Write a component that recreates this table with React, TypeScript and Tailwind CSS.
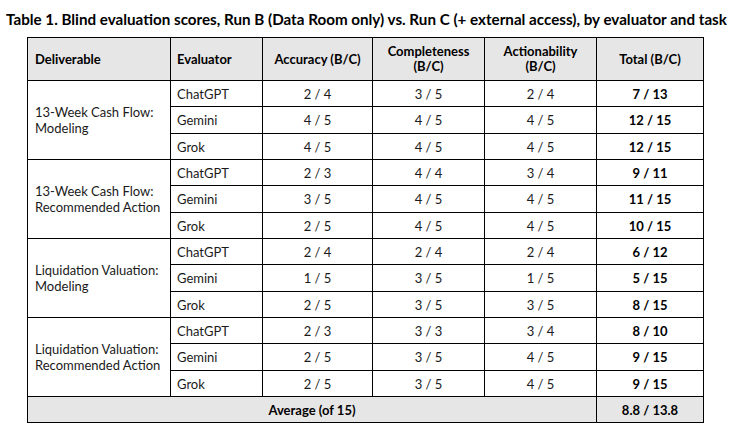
import React from "react";

type Row = { ev: string; a: string; c: string; ac: string; t: string };
type Group = { name: [string, string]; rows: Row[] };

const groups: Group[] = [
  {
    name: ["13-Week Cash Flow:", "Modeling"],
    rows: [
      { ev: "ChatGPT", a: "2 / 4", c: "3 / 5", ac: "2 / 4", t: "7 / 13" },
      { ev: "Gemini", a: "4 / 5", c: "4 / 5", ac: "4 / 5", t: "12 / 15" },
      { ev: "Grok", a: "4 / 5", c: "4 / 5", ac: "4 / 5", t: "12 / 15" },
    ],
  },
  {
    name: ["13-Week Cash Flow:", "Recommended Action"],
    rows: [
      { ev: "ChatGPT", a: "2 / 3", c: "4 / 4", ac: "3 / 4", t: "9 / 11" },
      { ev: "Gemini", a: "3 / 5", c: "4 / 5", ac: "4 / 5", t: "11 / 15" },
      { ev: "Grok", a: "2 / 5", c: "4 / 5", ac: "4 / 5", t: "10 / 15" },
    ],
  },
  {
    name: ["Liquidation Valuation:", "Modeling"],
    rows: [
      { ev: "ChatGPT", a: "2 / 4", c: "2 / 4", ac: "2 / 4", t: "6 / 12" },
      { ev: "Gemini", a: "1 / 5", c: "3 / 5", ac: "1 / 5", t: "5 / 15" },
      { ev: "Grok", a: "2 / 5", c: "3 / 5", ac: "3 / 5", t: "8 / 15" },
    ],
  },
  {
    name: ["Liquidation Valuation:", "Recommended Action"],
    rows: [
      { ev: "ChatGPT", a: "2 / 3", c: "3 / 3", ac: "3 / 4", t: "8 / 10" },
      { ev: "Gemini", a: "2 / 5", c: "3 / 5", ac: "4 / 5", t: "9 / 15" },
      { ev: "Grok", a: "2 / 5", c: "3 / 5", ac: "4 / 5", t: "9 / 15" },
    ],
  },
];

const heights = ["h-[26px]", "h-[27px]", "h-[26px]"];

function H({ children, left, pl }: { children: React.ReactNode; left?: boolean; pl?: string }) {
  return (
    <th
      className={
        left
          ? `border border-black text-left ${pl ?? ""}`
          : "border border-black text-center"
      }
    >
      <span className="font-bold text-black">{children}</span>
    </th>
  );
}

export default function App() {
  return (
    <div
      className="w-[731px] h-[437px] bg-white text-black overflow-hidden"
      style={{ fontFamily: "Lato, 'Open Sans', sans-serif" }}
    >
      <div className="pl-[6px] pt-[9px] h-[37px] text-[15.2px] font-bold leading-[20px] whitespace-nowrap">
        Table 1. Blind evaluation scores, Run B (Data Room only) vs. Run C (+ external access), by evaluator and task
      </div>
      <table className="ml-[27px] border-collapse table-fixed w-[676px] text-[13px] leading-[16px] text-[#1a1a1a]">
        <colgroup>
          <col className="w-[143px]" />
          <col className="w-[92px]" />
          <col className="w-[110px]" />
          <col className="w-[112px]" />
          <col className="w-[112px]" />
          <col className="w-[107px]" />
        </colgroup>
        <thead>
          <tr className="h-[43px] bg-[#e7e6e6] leading-[15px]">
            <H left pl="pl-[7px]">Deliverable</H>
            <H left pl="pl-[6px]">Evaluator</H>
            <H>Accuracy (B/C)</H>
            <H>
              Completeness
              <br />
              (B/C)
            </H>
            <H>
              Actionability
              <br />
              (B/C)
            </H>
            <H>Total (B/C)</H>
          </tr>
        </thead>
        <tbody>
          {groups.map((g) =>
            g.rows.map((r, i) => (
              <tr key={g.name.join() + r.ev} className={heights[i]}>
                {i === 0 && (
                  <td rowSpan={3} className="border border-black pl-[7px] align-middle">
                    {g.name[0]}
                    <br />
                    {g.name[1]}
                  </td>
                )}
                <td className="border border-black pl-[6px]">{r.ev}</td>
                <td className="border border-black text-center">{r.a}</td>
                <td className="border border-black text-center">{r.c}</td>
                <td className="border border-black text-center">{r.ac}</td>
                <td className="border border-black text-center font-bold text-black">{r.t}</td>
              </tr>
            ))
          )}
          <tr className="h-[26px] bg-[#e7e6e6] font-bold text-black">
            <td colSpan={5} className="border border-black text-center">
              Average (of 15)
            </td>
            <td className="border border-black text-center">8.8 / 13.8</td>
          </tr>
        </tbody>
      </table>
    </div>
  );
}
